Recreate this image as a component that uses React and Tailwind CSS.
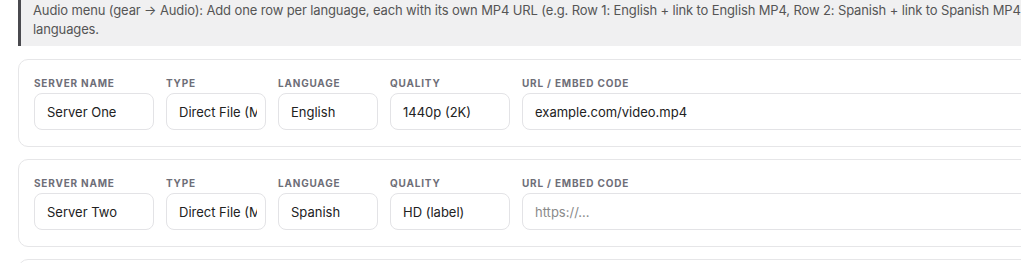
import React from 'react'

const FONT = { fontFamily: 'Inter, "Noto Sans", "Liberation Sans", sans-serif' }

const ROWS = [
  { name: 'Server One', type: 'Direct File (MP4)', lang: 'English', quality: '1440p (2K)', url: 'example.com/video.mp4' },
  { name: 'Server Two', type: 'Direct File (MP4)', lang: 'Spanish', quality: 'HD (label)', url: '' },
  { name: '', type: '', lang: '', quality: '', url: '' },
]

function Field({ label, width, value, placeholder }) {
  return (
    <div className={`flex flex-col shrink-0 ${width}`}>
      <span className="h-[14px] mb-[3px] text-[10px] leading-[14px] font-bold uppercase tracking-[0.08em] text-[#6e6e78] whitespace-nowrap">
        {label}
      </span>
      <div className="h-[37px] flex items-center rounded-lg border border-[#e3e3e6] bg-white pl-3 pr-2 pt-[2px] overflow-hidden">
        <span className={`text-[13px] whitespace-nowrap overflow-hidden ${value ? 'text-[#222]' : 'text-[#8a8a8a]'}`}>
          {value || placeholder}
        </span>
      </div>
    </div>
  )
}

function ServerRow({ row }) {
  return (
    <div className="h-[88px] shrink-0 rounded-[10px] border border-[#e6e6e8] bg-white px-[15px] pt-4">
      <div className="flex gap-3">
        <Field label="Server Name" width="w-[120px]" value={row.name} />
        <Field label="Type" width="w-[100px]" value={row.type} />
        <Field label="Language" width="w-[100px]" value={row.lang} />
        <Field label="Quality" width="w-[120px]" value={row.quality} />
        <Field label="URL / Embed Code" width="w-[560px]" value={row.url} placeholder="https://..." />
      </div>
    </div>
  )
}

export default function App() {
  return (
    <div className="w-full h-[263px] overflow-hidden bg-white" style={FONT}>
      <div className="w-[1120px] pl-[18px] flex flex-col gap-3">
        <div className="mb-px border-l-[3px] border-[#4a4a4f] bg-[#f0f0f1] pl-3 pr-3 pt-px pb-[7px] text-[13px] leading-[19px] tracking-[-0.13px] text-[#555]">
          <span className="whitespace-nowrap">
            Audio menu (gear → Audio): Add one row per language, each with its own MP4 URL (e.g. Row 1: English + link to English MP4, Row 2: Spanish + link to Spanish MP4). Viewers can switch between
          </span>
          <br />
          languages.
        </div>
        {ROWS.map((row, i) => (
          <ServerRow key={i} row={row} />
        ))}
      </div>
    </div>
  )
}
